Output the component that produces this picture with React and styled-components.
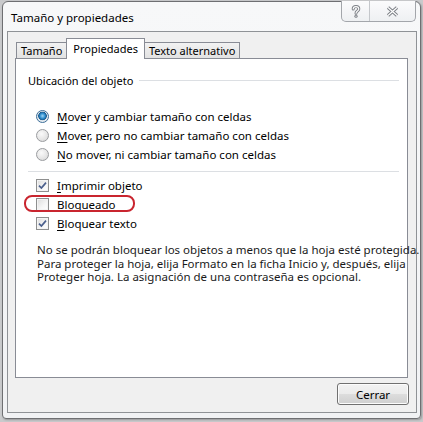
import React from "react";
import styled, { createGlobalStyle } from "styled-components";

const GlobalStyle = createGlobalStyle`
  html, body {
    margin: 0;
    padding: 0;
    background: #c9cacc;
  }
  body {
    font-family: "Noto Sans", "Open Sans", sans-serif;
    font-size: 11px;
    color: #000;
    width: 423px;
    height: 422px;
    overflow: hidden;
  }
`;

/* Window frame */
const Window = styled.div`
  box-sizing: border-box;
  width: 419px;
  height: 418px;
  margin: 1px 0 0 2px;
  border: 1px solid #6e6f72;
  border-radius: 6px 6px 4px 4px;
  background: linear-gradient(180deg, #f7f8f9 0%, #f1f2f4 100%);
  padding: 0 3px 5px 4px;
  display: flex;
  flex-direction: column;
  box-shadow: 1px 1px 2px rgba(0, 0, 0, 0.25);
`;

const TitleBar = styled.div`
  height: 29px;
  display: flex;
  align-items: flex-start;
  justify-content: space-between;
`;

const Title = styled.div`
  font-size: 11.5px;
  padding: 8px 0 0 4px;
  color: #000;
`;

const CaptionButtons = styled.div`
  display: flex;
  margin: -1px 1px 0 0;
  height: 20px;
  border: 1px solid #a3a6ab;
  border-top: none;
  border-radius: 0 0 5px 5px;
  overflow: hidden;
  background: linear-gradient(180deg, #fbfbfc 0%, #eef0f2 100%);
`;

const CaptionButton = styled.div`
  width: ${(p) => p.$w}px;
  display: flex;
  align-items: center;
  justify-content: center;
  & + & {
    border-left: 1px solid #c4c7cb;
  }
`;

/* Client area */
const Client = styled.div`
  flex: 1;
  border: 1px solid #8f9296;
  background: #f0f0f0;
  padding: 0 8px 7px 7px;
  display: flex;
  flex-direction: column;
`;

const TabRow = styled.div`
  height: 26px;
  display: flex;
  align-items: flex-end;
  padding-left: 1px;
`;

const Tab = styled.div`
  position: relative;
  box-sizing: border-box;
  height: ${(p) => (p.$active ? 21 : 16)}px;
  margin-bottom: ${(p) => (p.$active ? -1 : 0)}px;
  padding: ${(p) => (p.$active ? "3px 6px 0" : "1px 4px 0")};
  border: 1px solid #898c95;
  border-bottom: none;
  margin-left: -1px;
  background: ${(p) =>
    p.$active ? "#ffffff" : "linear-gradient(180deg, #f2f2f2 0%, #e2e2e2 100%)"};
  z-index: ${(p) => (p.$active ? 1 : 0)};
  white-space: nowrap;
  line-height: 13px;
  &:first-child {
    margin-left: 0;
  }
`;

const Panel = styled.div`
  flex: 1;
  background: #ffffff;
  border: 1px solid #898c95;
  padding: 14px 8px 0 12px;
  font-size: 11.5px;
`;

const GroupHeader = styled.div`
  display: flex;
  align-items: center;
  height: 14px;
  font-size: 11px;
  &::after {
    content: "";
    flex: 1;
    margin-left: 6px;
    border-top: 1px solid #dcdfe3;
  }
`;

const OptionList = styled.div`
  display: flex;
  flex-direction: column;
  padding-left: 8px;
  margin-top: ${(p) => p.$top}px;
`;

const Row = styled.label`
  position: relative;
  display: flex;
  align-items: center;
  height: 19px;
  gap: 8px;
  white-space: nowrap;
`;

const Key = styled.span`
  text-decoration: underline;
  text-underline-offset: 2px;
`;

const Radio = styled.span`
  box-sizing: border-box;
  width: 13px;
  height: 13px;
  border-radius: 50%;
  border: 1px solid ${(p) => (p.$on ? "#3c6e98" : "#9a9c9f")};
  background: ${(p) =>
    p.$on
      ? "radial-gradient(circle at 50% 45%, #9fd5f3 0, #2f8fcf 2.5px, #1a5b8f 4px, #dfe6ec 4.6px, #f5f7f9 100%)"
      : "radial-gradient(circle at 40% 35%, #fafafa 0, #e4e4e4 60%, #d0d0d0 100%)"};
  flex-shrink: 0;
`;

const Box = styled.span`
  box-sizing: border-box;
  width: 13px;
  height: 13px;
  border: 1px solid #8e8f8f;
  background: linear-gradient(135deg, #dcdcdc 0%, #f6f6f6 60%, #ffffff 100%);
  box-shadow: inset 0 0 0 1px #f4f4f4;
  display: flex;
  align-items: center;
  justify-content: center;
  flex-shrink: 0;
`;

const Separator = styled.div`
  height: 0;
  border-top: 1px solid #dcdfe3;
  margin: 7px 0 0 0;
`;

const Highlight = styled.span`
  position: absolute;
  left: -12px;
  top: 0;
  width: 111px;
  height: 17px;
  box-sizing: border-box;
  border: 2px solid #c9252f;
  border-radius: 8px;
  pointer-events: none;
`;

const Note = styled.p`
  margin: 10px 0 0 9px;
  line-height: 13.5px;
  white-space: nowrap;
  color: #1a1a1a;
`;

const ButtonRow = styled.div`
  display: flex;
  justify-content: flex-end;
  margin-top: 5px;
`;

const Button = styled.button`
  box-sizing: border-box;
  width: 72px;
  height: 22px;
  margin-right: -1px;
  border: 1px solid #707070;
  border-radius: 3px;
  background: linear-gradient(180deg, #f2f2f2 0%, #ebebeb 50%, #dddddd 51%, #cfcfcf 100%);
  box-shadow: inset 0 0 0 1px #fcfcfc;
  font-family: inherit;
  font-size: 11.5px;
  color: #000;
  padding: 0;
`;

const Check = () => (
  <svg width="9" height="9" viewBox="0 0 9 9">
    <path
      d="M1 4.6 L3.4 7 L8 1.6"
      fill="none"
      stroke="#4a5f8c"
      strokeWidth="1.7"
    />
  </svg>
);

const HelpGlyph = () => (
  <svg width="10" height="13" viewBox="0 0 10 13">
    <path
      d="M2.2 4 C2.2 0.8 7.8 0.8 7.8 4 C7.8 6 5 6 5 8.2"
      fill="none"
      stroke="#7d8187"
      strokeWidth="3"
      strokeLinecap="round"
    />
    <circle cx="5" cy="11.2" r="1.6" fill="#7d8187" />
    <path
      d="M2.2 4 C2.2 0.8 7.8 0.8 7.8 4 C7.8 6 5 6 5 8.2"
      fill="none"
      stroke="#ffffff"
      strokeWidth="1.1"
      strokeLinecap="round"
    />
    <circle cx="5" cy="11.2" r="0.6" fill="#ffffff" />
  </svg>
);

const CloseGlyph = () => (
  <svg width="13" height="11" viewBox="0 0 13 11">
    <path d="M2 1.5 L11 9.5 M11 1.5 L2 9.5" stroke="#7d8187" strokeWidth="3.2" />
    <path d="M2 1.5 L11 9.5 M11 1.5 L2 9.5" stroke="#ffffff" strokeWidth="1.2" />
  </svg>
);

const radios = [
  { key: "M", rest: "over y cambiar tamaño con celdas", on: true },
  { key: "M", rest: "over, pero no cambiar tamaño con celdas" },
  { key: "N", rest: "o mover, ni cambiar tamaño con celdas" },
];

const checks = [
  { key: "I", rest: "mprimir objeto", on: true },
  { key: "B", rest: "loqueado", marked: true },
  { key: "B", rest: "loquear texto", on: true },
];

export default function App() {
  return (
    <>
      <GlobalStyle />
      <Window>
        <TitleBar>
          <Title>Tamaño y propiedades</Title>
          <CaptionButtons>
            <CaptionButton $w={27}>
              <HelpGlyph />
            </CaptionButton>
            <CaptionButton $w={45}>
              <CloseGlyph />
            </CaptionButton>
          </CaptionButtons>
        </TitleBar>

        <Client>
          <TabRow>
            <Tab>Tamaño</Tab>
            <Tab $active>Propiedades</Tab>
            <Tab>Texto alternativo</Tab>
          </TabRow>

          <Panel>
            <GroupHeader>Ubicación del objeto</GroupHeader>

            <OptionList $top={20}>
              {radios.map((r, i) => (
                <Row key={i}>
                  <Radio $on={r.on} />
                  <span>
                    <Key>{r.key}</Key>
                    {r.rest}
                  </span>
                </Row>
              ))}
            </OptionList>

            <Separator />

            <OptionList $top={4}>
              {checks.map((c, i) => (
                <Row key={i}>
                  {c.marked && <Highlight />}
                  <Box>{c.on && <Check />}</Box>
                  <span>
                    <Key>{c.key}</Key>
                    {c.rest}
                  </span>
                </Row>
              ))}
            </OptionList>

            <Note>
              No se podrán bloquear los objetos a menos que la hoja esté protegida.
              <br />
              Para proteger la hoja, elija Formato en la ficha Inicio y, después, elija
              <br />
              Proteger hoja. La asignación de una contraseña es opcional.
            </Note>
          </Panel>

          <ButtonRow>
            <Button>Cerrar</Button>
          </ButtonRow>
        </Client>
      </Window>
    </>
  );
}
